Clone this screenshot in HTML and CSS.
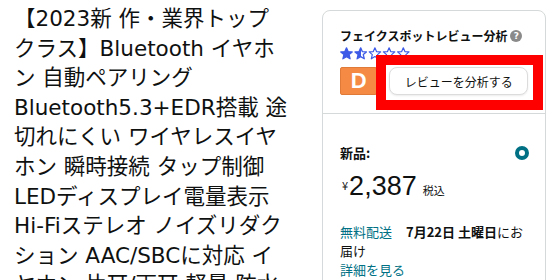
FILE: index.html
```html
<!DOCTYPE html>
<html lang="ja">
<head>
<meta charset="utf-8">
<link rel="stylesheet" href="styles.css">
</head>
<body>
<div class="page">
  <h1 class="product-title">
    <span class="ln">【2023新 作・業界トップ</span>
    <span class="ln">クラス】Bluetooth イヤホ</span>
    <span class="ln">ン 自動ペアリング</span>
    <span class="ln">Bluetooth5.3+EDR搭載 途</span>
    <span class="ln">切れにくい ワイヤレスイヤ</span>
    <span class="ln">ホン 瞬時接続 タップ制御</span>
    <span class="ln">LEDディスプレイ電量表示</span>
    <span class="ln">Hi-Fiステレオ ノイズリダク</span>
    <span class="ln">ション AAC/SBCに対応 イ</span>
    <span class="ln">ヤホン 片耳/両耳 軽量 防水</span>
  </h1>
  <div class="card">
    <div class="fakespot">
      <div class="fs-title">フェイクスポットレビュー分析 <span class="help">?</span></div>
      <div class="stars">
        <svg width="72" height="13" viewBox="0 0 72 13">
          <defs>
            <linearGradient id="half" x1="0" x2="1" y1="0" y2="0">
              <stop offset="0.5" stop-color="#3d5be6"/>
              <stop offset="0.5" stop-color="#ffffff"/>
            </linearGradient>
            <polygon id="st" points="6.5,0.8 8.1,4.6 12.2,4.9 9.1,7.6 10.1,11.8 6.5,9.6 2.9,11.8 3.9,7.6 0.8,4.9 4.9,4.6"/>
          </defs>
          <use href="#st" x="0" fill="#3d5be6" stroke="#3d5be6" stroke-width="1.3" stroke-linejoin="round"/>
          <use href="#st" x="14.2" fill="url(#half)" stroke="#3d5be6" stroke-width="1.3" stroke-linejoin="round"/>
          <use href="#st" x="28.4" fill="#fff" stroke="#3d5be6" stroke-width="1.2" stroke-linejoin="round"/>
          <use href="#st" x="42.6" fill="#fff" stroke="#3d5be6" stroke-width="1.2" stroke-linejoin="round"/>
          <use href="#st" x="56.8" fill="#fff" stroke="#3d5be6" stroke-width="1.2" stroke-linejoin="round"/>
        </svg>
      </div>
      <div class="grade-row">
        <span class="grade">D</span>
        <button class="analyze">レビューを分析する</button>
      </div>
    </div>
    <div class="highlight"></div>
    <div class="offer">
      <div class="offer-head">
        <span class="condition">新品:</span>
        <span class="radio"></span>
      </div>
      <div class="price"><span class="yen">¥</span><span class="amount">2,387</span><span class="tax">税込</span></div>
      <p class="delivery"><a class="link">無料配送</a><b class="date">7月22日 土曜日</b>にお届け</p>
      <a class="link details">詳細を見る</a>
    </div>
  </div>
</div>
</body>
</html>
```

FILE: styles.css
```css
html, body {
  margin: 0;
  padding: 0;
  background: #fff;
}
body {
  font-family: "DejaVu Sans", "Noto Sans CJK JP", sans-serif;
  color: #0f1111;
  width: 560px;
  height: 280px;
  overflow: hidden;
}
.page {
  display: flex;
  align-items: flex-start;
}
.product-title {
  margin: 0;
  padding: 4px 0 0 14px;
  width: 290px;
  font-size: 21.5px;
  font-weight: normal;
  line-height: 29.6px;
  color: #0f1111;
}
.ln {
  display: block;
  white-space: nowrap;
}
.card {
  position: relative;
  margin: 10px 0 0 18px;
  width: 222px;
  height: 300px;
  border: 1px solid #d5d9d9;
  border-radius: 8px;
}
.fakespot {
  padding: 16px 17px 18px 17px;
  border-bottom: 1px solid #d5d9d9;
}
.fs-title {
  font-size: 12px;
  font-weight: bold;
  line-height: 18px;
  font-family: "Noto Sans CJK JP", sans-serif;
  display: flex;
  align-items: center;
  gap: 3px;
}
.help {
  display: inline-flex;
  align-items: center;
  justify-content: center;
  width: 12px;
  height: 12px;
  border-radius: 50%;
  background: #8a8a8a;
  color: #fff;
  font-family: "DejaVu Sans", sans-serif;
  font-size: 9px;
  font-weight: bold;
}
.stars {
  height: 13px;
  margin-top: 2px;
  line-height: 0;
}
.grade-row {
  display: flex;
  align-items: center;
  gap: 12px;
  margin-top: 7px;
}
.grade {
  width: 38px;
  height: 28px;
  box-sizing: border-box;
  background: #f58a45;
  border: 1px solid #e07a38;
  border-radius: 2px;
  color: #fff;
  font-family: "Liberation Sans", sans-serif;
  font-weight: bold;
  font-size: 22px;
  display: flex;
  align-items: center;
  justify-content: center;
}
.analyze {
  width: 141px;
  height: 28px;
  border: 1px solid #dcdcdc;
  border-radius: 8px;
  background: #fff;
  box-shadow: 0 1px 2px rgba(0,0,0,0.08);
  font-family: "Noto Sans CJK JP", sans-serif;
  font-size: 12px;
  color: #0f1111;
  padding: 0;
}
.highlight {
  position: absolute;
  left: 53px;
  top: 44px;
  width: 147px;
  height: 35px;
  border: 10px solid #ff0000;
}
.offer {
  padding: 29px 17px 0 17px;
  font-family: "Noto Sans CJK JP", sans-serif;
}
.offer-head {
  display: flex;
  justify-content: space-between;
  align-items: center;
}
.condition {
  font-size: 13px;
  font-weight: bold;
  line-height: 20px;
}
.radio {
  width: 14px;
  height: 14px;
  box-sizing: border-box;
  border: 4px solid #007185;
  border-radius: 50%;
  margin-right: -1px;
}
.price {
  display: flex;
  align-items: baseline;
  margin-top: 8px;
  height: 30px;
}
.yen {
  font-size: 11px;
  align-self: flex-start;
  margin: 6px 1px 0 2px;
}
.amount {
  font-family: "Liberation Sans", sans-serif;
  font-size: 27px;
  line-height: 30px;
}
.tax {
  font-size: 11px;
  margin-left: 6px;
}
.delivery {
  margin: 21px 0 0 0;
  font-size: 13px;
  line-height: 19px;
}
.date {
  font-size: 13px;
  margin-left: 14px;
}
.link {
  color: #007185;
  text-decoration: none;
}
.details {
  display: block;
  font-size: 13px;
  line-height: 19px;
}
```
